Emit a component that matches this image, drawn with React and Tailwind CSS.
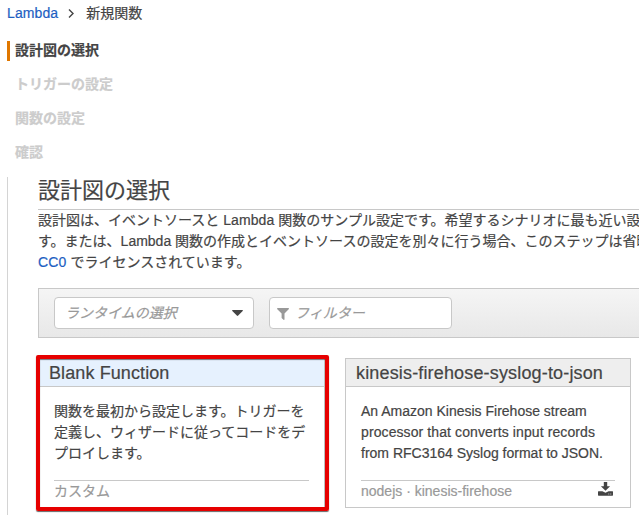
const steps = ['設計図の選択', 'トリガーの設定', '関数の設定', '確認'];

function Breadcrumb() {
  return (
    <nav className="flex h-[26px] items-center pl-[7px] leading-[21px]">
      <a className="tracking-[0.1px] text-[#1e5fc2]">Lambda</a>
      <svg className="ml-[10px] mr-[12px] h-[9px] w-[6px]" viewBox="0 0 6 9" fill="none" stroke="#444" strokeWidth="1.4">
        <path d="M1 .5 5 4.5 1 8.5" />
      </svg>
      <span>新規関数</span>
    </nav>
  );
}

function Steps() {
  return (
    <ul className="mt-[15px] flex flex-col gap-[14px] pl-[7px] font-bold leading-[20px]">
      {steps.map((s, i) => (
        <li
          key={s}
          className={
            i === 0
              ? 'h-[20px] border-l-[3px] border-[#e07700] pl-[5px] leading-[19px]'
              : 'h-[20px] border-l-[3px] border-transparent pl-[5px] leading-[19px] text-[#cccccc]'
          }
        >
          {s}
        </li>
      ))}
    </ul>
  );
}

function FilterBar() {
  return (
    <div className="mt-[15px] flex h-[50px] items-center gap-[15px] border border-r-0 border-[#c8c8c8] bg-linear-to-b from-[#f5f5f5] to-[#e8e8e8] pl-[15px] text-[#999]">
      <div className="flex h-[32px] w-[200px] items-center justify-between rounded-[4px] border border-[#c8c8c8] bg-white pl-[10px] pr-[10px]">
        <span className="italic">ランタイムの選択</span>
        <svg className="h-[6px] w-[11px]" viewBox="0 0 11 6" fill="#444">
          <path d="M.5 0h10q.6.4.2.9L6.2 5.6q-.7.6-1.4 0L.3.9Q-.1.4.5 0Z" />
        </svg>
      </div>
      <div className="flex h-[32px] w-[183px] items-center rounded-[4px] border border-[#c8c8c8] bg-white pl-[7px]">
        <svg className="mr-[6px] mt-[1px] h-[12px] w-[12px]" viewBox="0 0 12 12" fill="#999">
          <path d="M.5 0h11q.8.5.2 1.2L7.5 5.4v6.1q-.3.7-1 .3L4.6 10V5.4L.3 1.2Q-.2.4.5 0Z" />
        </svg>
        <span className="italic">フィルター</span>
      </div>
    </div>
  );
}

function Card({ title, lines, tags, selected, download }) {
  return (
    <section className={selected ? 'relative h-[150px] w-[287px] border border-[#c8c8c8]' : 'h-[150px] w-[286px] border border-[#c8c8c8]'}>
      <h2
        className={
          selected
            ? 'h-[28px] border-b border-[#c8c8c8] bg-[#e6f1fe] pl-[10px] text-[18px] leading-[28px] tracking-[0.1px]'
            : 'h-[28px] border-b border-[#c8c8c8] bg-[#eeeeee] pl-[10px] text-[18px] leading-[28px] tracking-[0.16px]'
        }
      >
        {title}
      </h2>
      <div className="mx-[15px] mt-[14px] h-[79px] leading-[21px]">
        {lines.map((l) => (
          <p key={l.text} className={l.wide ? 'w-max tracking-[0.1px]' : 'w-max'}>
            {l.text}
          </p>
        ))}
      </div>
      <div className="mx-[15px] flex justify-between border-t border-[#c8c8c8] leading-[20px] text-[#999]">
        <span>{tags}</span>
        {download && (
          <svg className="mr-[2px] mt-[1px] h-[14px] w-[15px]" viewBox="0 0 15 14" fill="#444">
            <path d="M5.8 0h3.4v4.2h2.9L7.5 8.8 2.9 4.2h2.9Z" />
            <path d="M.5 9.2h3.9l3.1 1.5 3.1-1.5h3.9q.5 0 .5.5v3.4q0 .6-.6.6H.6q-.6 0-.6-.6V9.7q0-.5.5-.5Z" />
            <path d="M10.4 11.6h.8v.8h-.8zM12.4 11.6h.8v.8h-.8z" fill="#ddd" />
          </svg>
        )}
      </div>
      {selected && (
        <div className="absolute -left-[3px] -top-[4px] h-[156px] w-[293px] rounded-[2px] border-4 border-[#e60000] shadow-[0_1px_1px_rgba(0,0,0,0.6),inset_0_1px_1px_rgba(0,0,0,0.5)]" />
      )}
    </section>
  );
}

export default function App() {
  return (
    <div className="h-[515px] w-[639px] overflow-hidden whitespace-nowrap bg-white font-['Liberation_Sans','Noto_Sans_CJK_JP',sans-serif] text-[14px] text-[#444] [-webkit-text-stroke:0.2px_currentColor]">
      <Breadcrumb />
      <Steps />
      <main className="ml-[7px] mt-[14px] h-[338px] border-l border-[#d4d4d4] pl-[30px]">
        <h1 className="h-[33px] border-b border-[#c8c8c8] text-[22px] leading-[27px]">設計図の選択</h1>
        <div className="h-[63px] leading-[21px]">
          <p>設計図は、イベントソースと <span className="tracking-[0.1px]">Lambda</span> 関数のサンプル設定です。希望するシナリオに最も近い設</p>
          <p>す。または、Lambda 関数の作成とイベントソースの設定を別々に行う場合、このステップは省略</p>
          <p>
            <a className="tracking-[0.2px] text-[#1e5fc2]">CC0</a> でライセンスされています。
          </p>
        </div>
        <FilterBar />
        <div className="mt-[20px] flex gap-[20px]">
          <Card
            selected
            title="Blank Function"
            lines={[
              { text: '関数を最初から設定します。トリガーを' },
              { text: '定義し、ウィザードに従ってコードをデ' },
              { text: 'プロイします。' },
            ]}
            tags="カスタム"
          />
          <Card
            download
            title="kinesis-firehose-syslog-to-json"
            lines={[
              { text: 'An Amazon Kinesis Firehose stream' },
              { text: 'processor that converts input records', wide: true },
              { text: 'from RFC3164 Syslog format to JSON.' },
            ]}
            tags="nodejs · kinesis-firehose"
          />
        </div>
      </main>
    </div>
  );
}
